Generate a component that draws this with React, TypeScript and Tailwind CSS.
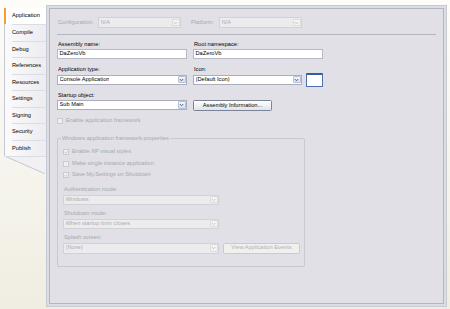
import React from "react";

const TABS = ["Application", "Compile", "Debug", "References", "Resources", "Settings", "Signing", "Security", "Publish"];

function Chevron({ disabled }: { disabled?: boolean }) {
  return (
    <svg width="5" height="4" viewBox="0 0 5 4">
      <path d="M0.8 1 L2.5 2.8 L4.2 1" fill="none" stroke={disabled ? "#c2c2c4" : "#4a5a7c"} strokeWidth="0.9" />
    </svg>
  );
}

function Select({ value, className, disabled }: { value: string; className: string; disabled?: boolean }) {
  return (
    <div
      className={`flex h-[10px] items-center justify-between border pl-[1.5px] ${className} ${
        disabled ? "border-[#d2d2d6] bg-[#ececee] text-[#acabb0]" : "border-[#a9afba] bg-white text-black"
      }`}
    >
      <span className="truncate leading-none">{value}</span>
      <div
        className={`m-[0.5px] flex h-[7.5px] w-[8px] items-center justify-center rounded-[1px] border ${
          disabled ? "border-[#dcdcdc] bg-[#f3f3f1]" : "border-[#b6c2d8] bg-gradient-to-b from-[#f4f6fb] to-[#d6deee]"
        }`}
      >
        <Chevron disabled={disabled} />
      </div>
    </div>
  );
}

function Check({ checked, label }: { checked?: boolean; label: string }) {
  return (
    <div className="flex h-[6px] items-center gap-[3px] text-[#a9a8ad]">
      <div className="flex h-[6px] w-[6px] items-center justify-center border border-[#cacacf] bg-[#efeff1]">
        {checked && (
          <svg width="5" height="5" viewBox="0 0 5 5">
            <path d="M1 2.4 L2.1 3.6 L4.1 1.2" fill="none" stroke="#b4b4b8" strokeWidth="0.8" />
          </svg>
        )}
      </div>
      <span className="leading-none">{label}</span>
    </div>
  );
}

function Label({ text, disabled }: { text: string; disabled?: boolean }) {
  return (
    <div className={`h-[8px] pl-[1px] leading-[8px] ${disabled ? "text-[#a9a8ad]" : "text-black"}`}>{text}</div>
  );
}

export default function App() {
  return (
    <div className="flex h-[309px] w-[450px] bg-gradient-to-b from-[#fdfcf9] to-[#f0eee2] pb-[2px] pl-[4px] pr-[3px] pt-[5px] font-['Liberation_Sans',Arial,sans-serif] text-[5.7px]">
      {/* Tabs */}
      <div className="mt-[2.5px] flex w-[42px] flex-col">
        {TABS.map((t, i) => (
          <div
            key={t}
            className={`flex h-[16.5px] items-center pl-[6px] text-black ${
              i === 0
                ? "border-l-2 border-l-[#f0a030] bg-white"
                : "border-l border-l-[#c3c7d1] bg-gradient-to-r from-[#fbfbfc] to-[#ececf1] pl-[7px]"
            }`}
          >
            <div className={`flex h-full flex-1 items-center ${i > 0 ? "border-t border-t-[#dcdde3]" : ""}`}>{t}</div>
          </div>
        ))}
        <svg width="42" height="18" viewBox="0 0 42 18">
          <polygon points="0,0 42,0 42,18 40,18" fill="#f1f1f4" />
          <line x1="0.5" y1="0" x2="40.5" y2="17.5" stroke="#c3c7d1" strokeWidth="1" />
          <line x1="1" y1="0.5" x2="42" y2="0.5" stroke="#dcdde3" strokeWidth="1" />
        </svg>
      </div>

      {/* Panel */}
      <div className="flex flex-1 border border-[#c6cad4] bg-[#dcdce3] p-[2px]">
        <div className="flex flex-1 flex-col border border-[#b2b6c3] bg-[#e0e0e6] px-[7px]">
          {/* Configuration row */}
          <div className="mt-[8px] flex h-[11px] items-center">
            <div className="w-[41px] pl-[1px] text-[#a9a8ad]">Configuration:</div>
            <Select value="N/A" className="h-[11px] w-[83px]" disabled />
            <div className="ml-[10px] w-[28px] text-[#a9a8ad]">Platform:</div>
            <Select value="N/A" className="h-[11px] w-[83px]" disabled />
          </div>
          <div className="mt-[5.5px] h-px bg-[#b4b5bf]" />

          {/* Main fields */}
          <div className="mt-[5px] grid w-[266px] grid-cols-[130px_130px] gap-x-[6px]">
            <div className="flex flex-col">
              <Label text="Assembly name:" />
              <div className="mt-[1.5px] flex h-[10px] items-center border border-[#b6b9c2] bg-white pl-[1.5px] leading-none">
                DaZeroVb
              </div>
              <div className="mt-[6px]">
                <Label text="Application type:" />
              </div>
              <Select value="Console Application" className="mt-[1.5px] w-[130px]" />
              <div className="mt-[6px]">
                <Label text="Startup object:" />
              </div>
              <Select value="Sub Main" className="mt-[1.5px] w-[130px]" />
            </div>
            <div className="flex flex-col">
              <Label text="Root namespace:" />
              <div className="mt-[1.5px] flex h-[10px] items-center border border-[#b6b9c2] bg-white pl-[1.5px] leading-none">
                DaZeroVb
              </div>
              <div className="mt-[6px]">
                <Label text="Icon:" />
              </div>
              <div className="mt-[1.5px] flex h-[10px] items-center gap-[4px]">
                <Select value="(Default Icon)" className="w-[109px]" />
                <div className="h-[14px] w-[17px] shrink-0 rounded-[1px] border border-[#4d6fae] border-t-2 border-t-[#2f5cae] bg-white" />
              </div>
              <div className="mt-[6px] h-[8px]" />
              <div className="mt-[1.5px] flex h-[11px] w-[79px] items-center justify-center rounded-[1.5px] border border-[#7b8494] bg-gradient-to-b from-white to-[#e2e3ea] leading-none text-black">
                Assembly Information...
              </div>
            </div>
          </div>

          <div className="mt-[7px]">
            <Check label="Enable application framework" />
          </div>

          {/* Group box */}
          <div className="relative mt-[14px] flex h-[128.5px] w-[248px] flex-col rounded-[2px] border border-[#c9c9d1] pl-[5px] pt-[10px]">
            <span className="absolute -top-[4px] left-[3px] bg-[#e0e0e6] px-[1px] leading-[7px] text-[#a9a8ad]">
              Windows application framework properties
            </span>
            <Check checked label="Enable XP visual styles" />
            <div className="mt-[5.5px]">
              <Check label="Make single instance application" />
            </div>
            <div className="mt-[5.5px]">
              <Check checked label="Save My.Settings on Shutdown" />
            </div>
            <div className="mt-[7px]">
              <Label text="Authentication mode:" disabled />
            </div>
            <Select value="Windows" className="mt-[1.5px] w-[156px]" disabled />
            <div className="mt-[4.5px]">
              <Label text="Shutdown mode:" disabled />
            </div>
            <Select value="When startup form closes" className="mt-[1.5px] w-[156px]" disabled />
            <div className="mt-[4.5px]">
              <Label text="Splash screen:" disabled />
            </div>
            <div className="mt-[1.5px] flex items-center gap-[4px]">
              <Select value="(None)" className="h-[11px] w-[156px]" disabled />
              <div className="flex h-[11px] w-[77px] items-center justify-center rounded-[1.5px] border border-[#cbcbce] bg-[#f0f0ee] leading-none text-[#b2b1b5]">
                View Application Events
              </div>
            </div>
          </div>
        </div>
      </div>
    </div>
  );
}
